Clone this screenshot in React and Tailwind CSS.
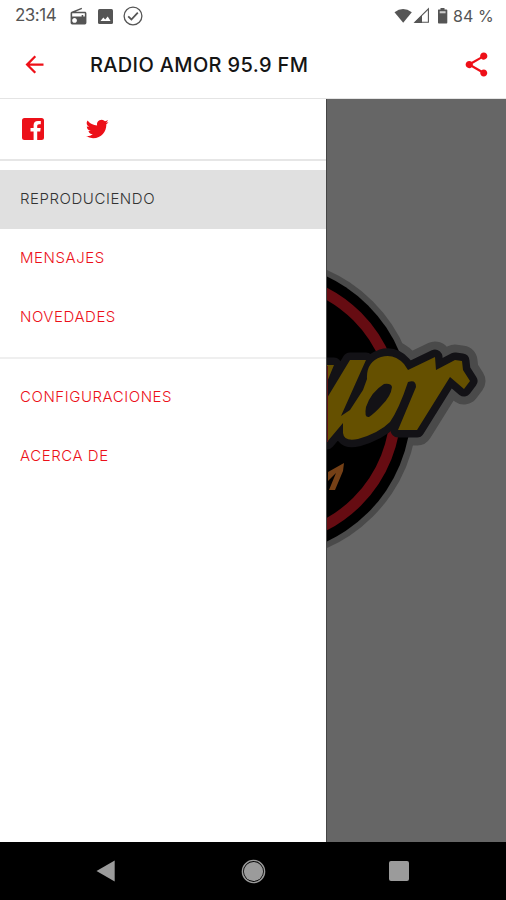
import React from 'react';
import { MdArrowBack, MdShare, MdRadio } from 'react-icons/md';

// Menu entries, split in the two groups of the drawer
const mainItems = [
  { label: 'REPRODUCIENDO', active: true },
  { label: 'MENSAJES', active: false },
  { label: 'NOVEDADES', active: false },
];

const otherItems = [
  { label: 'CONFIGURACIONES', active: false },
  { label: 'ACERCA DE', active: false },
];

const LETTERS =
  'M318 366 L334 366 L327 383 L318 392 L318 406 L327 399 L350 361 L366 361 L341 417 L350 411 L363 391 L367 380 Q366 363 381 358 Q394 354 404 365 L408 371 L435 358 L436 371 L455 361 L462 362 L463 371 L470 382 L464 390 L450 378 L417 431 L398 431 L416 388 Q416 380 408 383 Q399 410 390 423 Q379 434 358 440 Q344 443 343 434 L343 424 L327 443 L318 443 Z';

function StatusBar() {
  return (
    <div className="flex h-8 items-center pl-[15px] pr-[14px] text-[17px] text-[#555]">
      <span className="w-[42px] tracking-[-0.5px]">23:14</span>
      <MdRadio className="ml-[12px] h-[19px] w-[19px]" />
      <svg className="ml-[10px] h-[15px] w-[15px]" viewBox="0 0 15 15">
        <rect width="15" height="15" rx="1.5" fill="currentColor" />
        <path d="M2.5 12 L5.3 8.6 L7.2 10.6 L9.7 7.6 L12.6 12 Z" fill="#fff" />
      </svg>
      <svg className="ml-[10px] h-5 w-5" viewBox="0 0 20 20" fill="none" stroke="currentColor">
        <circle cx="10" cy="10" r="8.9" strokeWidth="1.3" />
        <path d="M5.2 10.4 L8.4 13.5 L14.8 6.6" strokeWidth="1.8" />
      </svg>

      <svg className="ml-auto h-[18px] w-[56px]" viewBox="0 0 56 18" fill="currentColor">
        <path d="M0.5 5.2 Q9 -1.2 17.8 5.2 L9.2 15.8 Z" />
        <path d="M20.8 15.3 L34.4 1.8 V15.3 Z" fill="none" stroke="currentColor" strokeWidth="1.1" />
        <path d="M20 16 L28 8.2 V16 Z" />
        <path d="M44.5 2.5 H46.5 V1 H50.5 V2.5 H52.5 Q53.3 2.5 53.3 3.3 V15.5 Q53.3 16.5 52.5 16.5 H44.8 Q44 16.5 44 15.5 V3.3 Q44 2.5 44.5 2.5 Z" />
        <path d="M45.7 4.2 H51.6 V6.3 H45.7 Z" fill="#ccc" />
      </svg>
      <span className="ml-[3px] w-[39px] whitespace-nowrap text-[16px] tracking-[0.1px]">84 %</span>
    </div>
  );
}

function MenuItem({ label, active }) {
  return (
    <button
      type="button"
      className={`flex h-[59px] w-full items-center pl-[20px] text-left text-[15px] font-light tracking-[0.55px] ${
        active ? 'bg-[#e0e0e0] text-[#333]' : 'text-[#ec1019]'
      }`}
    >
      {label}
    </button>
  );
}

// Station logo, cut by the drawer on its left side
function StationLogo() {
  return (
    <svg className="h-[742px] w-[180px]" viewBox="327 100 180 742">
      <g fill="#4a4a4a" stroke="#4a4a4a" strokeLinejoin="round">
        <circle cx="265.5" cy="410" r="152" stroke="none" />
        <path d={LETTERS} strokeWidth="31" />
      </g>
      <circle cx="264.5" cy="410" r="146.5" fill="#000" />
      <circle cx="264.5" cy="410" r="131" fill="none" stroke="#660c12" strokeWidth="11" />
      <path d={LETTERS} fill="#131216" stroke="#131216" strokeWidth="15" strokeLinejoin="round" />
      <path d={LETTERS} fill="#655000" />
      <path
        d="M384 385 Q391 384 392 388 Q391 397 382 406 Q375 414 369 418 Q364 419 366 408 Q371 393 384 385 Z"
        fill="#131216"
      />
      <path d="M326 367 H328 V443 H326 Z" fill="#5a0f12" />
      <path d="M328 473 L344 464 L343 472 L335 491 L329 491 L336 474 L328 482 Z" fill="#754016" />
    </svg>
  );
}

function App() {
  return (
    <div className="flex h-[900px] w-[506px] flex-col overflow-hidden bg-white font-['Inter',sans-serif]">
      <StatusBar />

      <header className="flex h-[67px] items-center border-b border-[#e4e4e4] pb-px pl-[21px] pr-[15px]">
        <MdArrowBack className="h-[27px] w-[27px] text-[#ee1018]" />
        <h1 className="ml-[42px] whitespace-nowrap text-[20px] font-medium tracking-[0.35px] text-[#151515]">
          RADIO AMOR 95.9 FM
        </h1>
        <MdShare className="ml-auto h-[29px] w-[29px] text-[#ee1018]" />
      </header>

      <div className="flex h-[743px]">
        <nav className="h-full w-[326px] shrink-0 bg-white">
          <div className="flex h-[62px] items-center border-b-2 border-[#e6e6e6] pl-[22px] text-[#ec1019]">
            <svg className="h-[22px] w-[22px]" viewBox="0 0 22 22" fill="currentColor">
              <path d="M2.5 0 H19.5 Q22 0 22 2.5 V19.5 Q22 22 19.5 22 H15.2 V13.5 H18.2 L18.7 10 H15.2 V7.8 Q15.2 6.2 17 6.2 H18.8 V3.1 Q17.5 2.9 16 2.9 Q11.6 2.9 11.6 7.2 V10 H8.5 V13.5 H11.6 V22 H2.5 Q0 22 0 19.5 V2.5 Q0 0 2.5 0 Z" />
            </svg>
            <svg className="ml-[41px] h-[24px] w-[24px]" viewBox="0 0 24 24" fill="currentColor">
              <path d="M23.64 4.94c-.84.37-1.74.62-2.68.73.96-.58 1.7-1.49 2.05-2.58-.9.54-1.9.92-2.96 1.13a4.66 4.66 0 0 0-7.94 4.25A13.23 13.23 0 0 1 2.5 3.6a4.66 4.66 0 0 0 1.44 6.22 4.64 4.64 0 0 1-2.11-.58v.06a4.66 4.66 0 0 0 3.74 4.57c-.69.19-1.41.22-2.1.08a4.66 4.66 0 0 0 4.35 3.24A9.35 9.35 0 0 1 .93 19.1a13.18 13.18 0 0 0 7.14 2.09c8.57 0 13.25-7.1 13.25-13.25l-.02-.6a9.46 9.46 0 0 0 2.33-2.41z" />
            </svg>
          </div>

          <div className="pt-[9px]">
            {mainItems.map((item) => (
              <MenuItem key={item.label} label={item.label} active={item.active} />
            ))}
          </div>

          <div className="mt-[10px] border-t-2 border-[#efefef] pt-[9px]">
            {otherItems.map((item) => (
              <MenuItem key={item.label} label={item.label} active={item.active} />
            ))}
          </div>
        </nav>

        {/* Player screen, dimmed while the drawer is open */}
        <main className="h-full w-[180px] border-l border-[#454545] bg-[#666]">
          <StationLogo />
        </main>
      </div>

      <footer className="flex h-[58px] items-center bg-black pl-[96px] text-[#9b9b9b]">
        <svg className="h-[22px] w-[19px]" viewBox="0 0 19 22" fill="currentColor">
          <path d="M18.7 0.5 V21.5 L0.5 11 Z" />
        </svg>
        <svg className="ml-[126px] h-[25px] w-[25px]" viewBox="0 0 25 25" fill="currentColor">
          <circle cx="12.5" cy="12.5" r="9.6" />
          <circle cx="12.5" cy="12.5" r="11.1" fill="none" stroke="currentColor" strokeWidth="1.4" />
        </svg>
        <span className="ml-[123px] h-[20px] w-[20px] rounded-[2px] bg-[#9b9b9b]" />
      </footer>
    </div>
  );
}

export default App;
